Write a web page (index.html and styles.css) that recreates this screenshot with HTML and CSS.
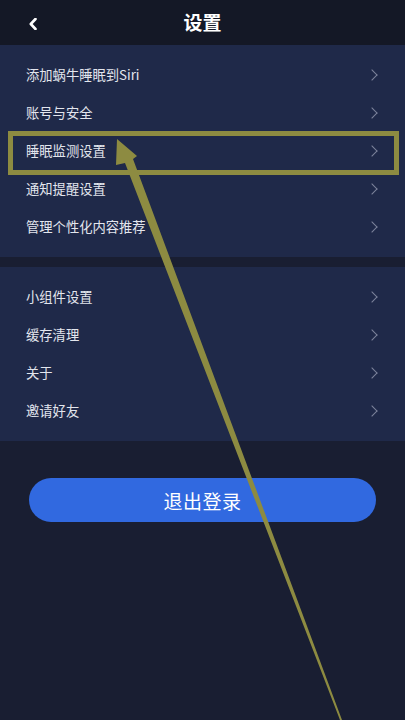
FILE: index.html
```html
<!DOCTYPE html>
<html lang="zh-CN">
<head>
<meta charset="utf-8">
<meta name="viewport" content="width=405">
<title>设置</title>
<link rel="stylesheet" href="styles.css">
</head>
<body>
<div class="screen">
  <header class="topbar">
    <div class="back">
      <svg width="8" height="12" viewBox="0 0 8 12"><path d="M6.5 1 L1.8 6 L6.5 11" fill="none" stroke="#ffffff" stroke-width="2.6" stroke-linecap="round" stroke-linejoin="round"/></svg>
    </div>
    <h1 class="title">设置</h1>
    <div class="spacer"></div>
  </header>

  <section class="group">
    <div class="row"><span class="label">添加蜗牛睡眠到Siri</span><span class="chev"></span></div>
    <div class="row"><span class="label">账号与安全</span><span class="chev"></span></div>
    <div class="row"><span class="label">睡眠监测设置</span><span class="chev"></span></div>
    <div class="row"><span class="label">通知提醒设置</span><span class="chev"></span></div>
    <div class="row"><span class="label">管理个性化内容推荐</span><span class="chev"></span></div>
  </section>

  <section class="group">
    <div class="row"><span class="label">小组件设置</span><span class="chev"></span></div>
    <div class="row"><span class="label">缓存清理</span><span class="chev"></span></div>
    <div class="row"><span class="label">关于</span><span class="chev"></span></div>
    <div class="row"><span class="label">邀请好友</span><span class="chev"></span></div>
  </section>

  <div class="logout-wrap">
    <button class="logout">退出登录</button>
  </div>

  <svg class="annotation" width="405" height="720" viewBox="0 0 405 720">
    <rect x="10.5" y="133.5" width="386" height="39" fill="none" stroke="#8d8b41" stroke-width="5"/>
    <polygon points="117,139 137,156 133,159 342,720 340,720 125,163 116,165" fill="#8d8b41"/>
  </svg>
</div>
</body>
</html>
```

FILE: styles.css
```css
* { box-sizing: border-box; }

html, body {
  margin: 0;
  padding: 0;
  background: #191e32;
}

body {
  font-family: "Noto Sans CJK SC", "Noto Sans", "Liberation Sans", sans-serif;
  color: #e3e6ee;
}

.screen {
  position: relative;
  width: 405px;
  height: 720px;
  overflow: hidden;
  background: #191e32;
}

.topbar {
  height: 45px;
  background: #141826;
  display: grid;
  grid-template-columns: 1fr auto 1fr;
  align-items: center;
}

.back {
  display: flex;
  align-items: center;
  padding-left: 29px;
  padding-top: 2px;
}

.title {
  margin: 0;
  font-size: 19px;
  font-weight: 700;
  color: #ffffff;
  line-height: 1;
  padding-bottom: 2px;
}

.group {
  background: #1f2949;
  padding: 11px 0;
}

.group + .group {
  margin-top: 10px;
}

.row {
  height: 38px;
  display: flex;
  align-items: center;
  justify-content: space-between;
  padding: 0 26px 0 26px;
}

.label {
  font-size: 13.3px;
  color: #e3e6ee;
  line-height: 1;
}

.chev {
  width: 8px;
  height: 8px;
  border-top: 1.7px solid #7d849c;
  border-right: 1.7px solid #7d849c;
  transform: rotate(45deg);
  margin-right: 3px;
}

.logout-wrap {
  padding: 37px 29px 0;
}

.logout {
  display: block;
  width: 100%;
  height: 44px;
  border: none;
  border-radius: 22px;
  background: #3169e0;
  color: #ffffff;
  font-family: "Noto Sans CJK SC", "Noto Sans", sans-serif;
  font-size: 19px;
  font-weight: 400;
  letter-spacing: 0.5px;
}

.annotation {
  position: absolute;
  left: 0;
  top: 0;
  pointer-events: none;
}
```
